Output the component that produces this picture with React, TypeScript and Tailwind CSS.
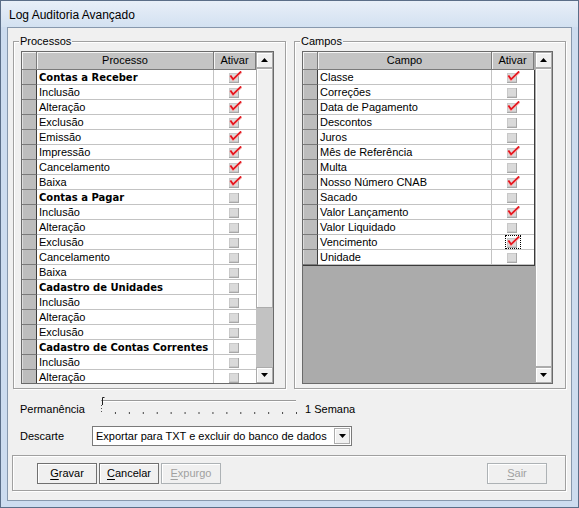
import type { ReactNode } from 'react';

type Item = { label: string; on: boolean; bold?: boolean; focus?: boolean };

const processos: Item[] = [
  { label: 'Contas a Receber', on: true, bold: true },
  { label: 'Inclusão', on: true },
  { label: 'Alteração', on: true },
  { label: 'Exclusão', on: true },
  { label: 'Emissão', on: true },
  { label: 'Impressão', on: true },
  { label: 'Cancelamento', on: true },
  { label: 'Baixa', on: true },
  { label: 'Contas a Pagar', on: false, bold: true },
  { label: 'Inclusão', on: false },
  { label: 'Alteração', on: false },
  { label: 'Exclusão', on: false },
  { label: 'Cancelamento', on: false },
  { label: 'Baixa', on: false },
  { label: 'Cadastro de Unidades', on: false, bold: true },
  { label: 'Inclusão', on: false },
  { label: 'Alteração', on: false },
  { label: 'Exclusão', on: false },
  { label: 'Cadastro de Contas Correntes', on: false, bold: true },
  { label: 'Inclusão', on: false },
  { label: 'Alteração', on: false },
];

const campos: Item[] = [
  { label: 'Classe', on: true },
  { label: 'Correções', on: false },
  { label: 'Data de Pagamento', on: true },
  { label: 'Descontos', on: false },
  { label: 'Juros', on: false },
  { label: 'Mês de Referência', on: true },
  { label: 'Multa', on: false },
  { label: 'Nosso Número CNAB', on: true },
  { label: 'Sacado', on: false },
  { label: 'Valor Lançamento', on: true },
  { label: 'Valor Liquidado', on: false },
  { label: 'Vencimento', on: true, focus: true },
  { label: 'Unidade', on: false },
];

function Check({ on }: { on: boolean }) {
  return (
    <svg width="13" height="13" viewBox="0 0 13 13" aria-hidden="true">
      <rect x="0" y="2" width="10" height="10" fill="#a8a8a8" />
      <rect x="0" y="2" width="9" height="9" fill="#c9c9c9" />
      <rect x="1" y="3" width="8" height="7" fill="#dadada" />
      {on && (
        <>
          <path d="M1.2 4.8 L4 8.8 L12.3 0.8" stroke="#f6b3b3" strokeWidth="2.6" fill="none" />
          <path d="M1.4 4.5 L4.1 8.3 L12.1 0.5" stroke="#e3121b" strokeWidth="1.7" fill="none" />
        </>
      )}
    </svg>
  );
}

function Arrow({ down }: { down?: boolean }) {
  return (
    <svg width="7" height="4" viewBox="0 0 7 4" aria-hidden="true">
      <path d={down ? 'M0 0 H7 L3.5 4 Z' : 'M0 4 H7 L3.5 0 Z'} fill="#000" />
    </svg>
  );
}

function ScrollButton({ down }: { down?: boolean }) {
  return (
    <div className="flex h-[16px] shrink-0 items-center justify-center border border-[#acacac] bg-[#f0f0f0] shadow-[inset_1px_1px_0_#fff]">
      <Arrow down={down} />
    </div>
  );
}

function ScrollBar({ full }: { full?: boolean }) {
  return (
    <div className="flex w-[17px] shrink-0 flex-col bg-[#c2c2c2]">
      <ScrollButton />
      <div
        className={`${full ? 'flex-1' : 'h-[240px]'} shrink-0 border border-[#acacac] bg-[#f0f0f0] shadow-[inset_1px_1px_0_#fff]`}
      />
      {!full && <div className="flex-1" />}
      <ScrollButton down />
    </div>
  );
}

function Row({ item, textW }: { item: Item; textW: string }) {
  return (
    <div className="flex h-[15px] shrink-0">
      <div className="w-[15px] shrink-0 border-b border-r border-b-[#7a7a7a] border-r-[#3c3c3c] bg-[#bdbdbd] shadow-[inset_1px_0_0_#dcdcdc]" />
      <div
        className={`${textW} shrink-0 overflow-hidden whitespace-nowrap border-b border-r border-[#c3c3c3] pl-[2px] ${
          item.bold
            ? "font-['DejaVu_Sans',sans-serif] text-[10px] font-bold leading-[15px]"
            : 'leading-[14px]'
        }`}
      >
        {item.label}
      </div>
      <div className="flex w-[42px] shrink-0 justify-center border-b border-[#c3c3c3]">
        {item.focus ? (
          <span className="flex h-[14px] border border-dotted border-black pl-[1px]">
            <Check on={item.on} />
          </span>
        ) : (
          <span className="pt-[1px]">
            <Check on={item.on} />
          </span>
        )}
      </div>
    </div>
  );
}

function Header({ title, textW }: { title: string; textW: string }) {
  const cell = 'shrink-0 border-b border-r border-[#7a7a7a] bg-[#c4c4c4] shadow-[inset_1px_1px_0_#f4f4f4]';
  return (
    <div className="flex h-[18px] shrink-0">
      <div className={`w-[15px] ${cell}`} />
      <div className={`${textW} ${cell} text-center leading-[16px]`}>{title}</div>
      <div className={`w-[42px] ${cell} text-center leading-[16px]`}>Ativar</div>
      <div className="flex-1 bg-[#ababab]" />
    </div>
  );
}

function Grid({
  title,
  items,
  width,
  textW,
  full,
}: {
  title: string;
  items: Item[];
  width: string;
  textW: string;
  full?: boolean;
}) {
  return (
    <div className={`flex h-[333px] ${width} border border-[#6a6a6a]`}>
      <div className={`flex min-w-0 flex-1 flex-col overflow-hidden ${full ? 'bg-[#ababab]' : 'bg-white'}`}>
        <Header title={title} textW={textW} />
        <div className={`flex flex-col bg-white ${full ? 'self-start border-b border-r border-[#3a3a3a]' : ''}`}>
          {items.map((item, i) => (
            <Row key={i} item={item} textW={textW} />
          ))}
        </div>
      </div>
      <ScrollBar full={full} />
    </div>
  );
}

function GroupBox({ title, width, children }: { title: string; width: string; children: ReactNode }) {
  return (
    <fieldset
      className={`${width} border border-[#a0a0a0] px-[7px] pb-[4px] pt-[3px] shadow-[inset_1px_1px_0_#fff,1px_1px_0_#fff]`}
    >
      <legend className="ml-[-2px] bg-[#f0f0f0] px-[1px] leading-[14px]">{title}</legend>
      {children}
    </fieldset>
  );
}

function Slider() {
  const ticks = Array.from({ length: 15 }, (_, i) => 0.5 + i * 13.93);
  return (
    <svg width="196" height="20" viewBox="0 0 196 20" aria-hidden="true">
      <line x1="0" y1="4.5" x2="195" y2="4.5" stroke="#9a9a9a" />
      <line x1="1" y1="5.5" x2="195" y2="5.5" stroke="#ffffff" />
      <path d="M1.5 9 V1.5 H3.5" stroke="#202020" fill="none" />
      <line x1="0.5" y1="9" x2="0.5" y2="18" stroke="#555" strokeDasharray="1 2" />
      {ticks.slice(1).map((x) => (
        <line key={x} x1={x} y1="16" x2={x} y2="18" stroke="#444" />
      ))}
    </svg>
  );
}

function Button({ label, disabled }: { label: string; disabled?: boolean }) {
  return (
    <button
      type="button"
      className={`flex h-[21px] w-[60px] items-center justify-center border bg-[#f0f0f0] shadow-[inset_1px_1px_0_#fff] ${
        disabled ? 'border-[#adb2b5] text-[#a0a0a0]' : 'border-[#707070] text-black'
      }`}
    >
      <span>
        <span className="underline underline-offset-[2px]">{label[0]}</span>
        {label.slice(1)}
      </span>
    </button>
  );
}

export default function App() {
  return (
    <div className="flex h-[508px] w-[579px] flex-col border border-[#5b6e88] bg-[#cddcef] font-['Liberation_Sans',Arial,sans-serif] text-[11px] text-black">
      <div className="flex h-[26px] shrink-0 items-center bg-gradient-to-b from-[#e8eff8] to-[#d3e1f1] pl-[8px] pt-[2px] text-[12px]">
        Log Auditoria Avançado
      </div>
      <div className="mx-[6px] mb-[6px] flex flex-1 flex-col border border-[#8798ad] bg-[#f0f0f0]">
        <div className="mt-[6px] flex gap-[8px] pl-[5px]">
          <GroupBox title="Processos" width="w-[273px]">
            <Grid title="Processo" items={processos} width="w-[253px]" textW="w-[177px]" />
          </GroupBox>
          <GroupBox title="Campos" width="w-[272px]">
            <Grid title="Campo" items={campos} width="w-[251px]" textW="w-[174px]" full />
          </GroupBox>
        </div>

        <div className="mt-[7px] flex h-[20px] items-start pl-[12px]">
          <span className="mt-[6px] w-[81px] leading-[14px]">Permanência</span>
          <Slider />
          <span className="ml-[8px] mt-[6px] leading-[14px]">1 Semana</span>
        </div>

        <div className="mt-[10px] flex items-center pl-[12px]">
          <span className="w-[72px]">Descarte</span>
          <div className="flex h-[20px] w-[260px] items-center border border-[#7a7a7a] bg-white pl-[3px]">
            <span className="flex-1 whitespace-nowrap">Exportar para TXT e excluir do banco de dados</span>
            <div className="mr-[1px] flex h-[16px] w-[16px] items-center justify-center border border-[#acacac] bg-[#f0f0f0] shadow-[inset_1px_1px_0_#fff]">
              <Arrow down />
            </div>
          </div>
        </div>

        <div className="ml-[4px] mt-[9px] flex h-[36px] w-[554px] items-start border border-[#a0a0a0] pl-[24px] pr-[18px] pt-[7px] shadow-[inset_1px_1px_0_#fff,1px_1px_0_#fff]">
          <div className="flex gap-[2px]">
            <Button label="Gravar" />
            <Button label="Cancelar" />
            <Button label="Expurgo" disabled />
          </div>
          <div className="flex-1" />
          <Button label="Sair" disabled />
        </div>
      </div>
    </div>
  );
}
